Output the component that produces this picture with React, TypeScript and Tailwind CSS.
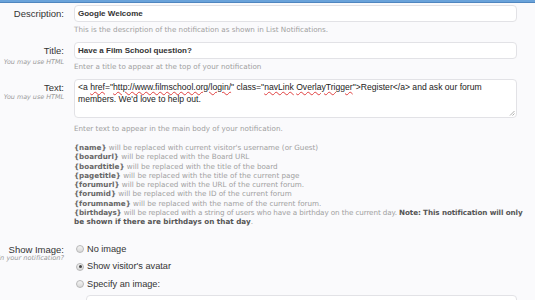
import React from "react";

const Sq = ({ children }: { children: React.ReactNode }) => (
  <span className="underline decoration-wavy decoration-[#e04040] decoration-1 underline-offset-[1px]">{children}</span>
);

const dv = { fontFamily: '"DejaVu Sans", Verdana, sans-serif' };

const Radio = ({ checked, label }: { checked?: boolean; label: string }) => (
  <div className="flex items-center h-[17.5px]">
    <span className="w-[8px] h-[8px] rounded-full border border-[#b8b8b8] bg-gradient-to-b from-[#f4f4f4] to-[#d8d8d8] flex items-center justify-center mr-[3px] ml-[2px]">
      {checked && <span className="w-[3px] h-[3px] rounded-full bg-[#444]" />}
    </span>
    <span className="text-[9.2px] text-[#333]">{label}</span>
  </div>
);

const vars: [string, string][] = [
  ["{name}", " will be replaced with current visitor's username (or Guest)"],
  ["{boardurl}", " will be replaced with the Board URL"],
  ["{boardtitle}", " will be replaced with the title of the board"],
  ["{pagetitle}", " will be replaced with the title of the current page"],
  ["{forumurl}", " will be replaced with the URL of the current forum."],
  ["{forumid}", " will be replaced with the ID of the current forum"],
  ["{forumname}", " will be replaced with the name of the current forum."],
];

export default function App() {
  return (
    <div
      className="w-[535px] h-[300px] overflow-hidden bg-[#fafafc] relative"
      style={{ fontFamily: '"Liberation Sans", Arial, sans-serif' }}
    >
      <div className="h-[3px] bg-[#6aa3da] border-b border-[#4f86bf]" />
      <div className="pt-[2px]">
        {/* Description */}
        <div className="grid grid-cols-[64px_443px] gap-x-[10px]">
          <div className="text-right text-[9.5px] leading-[17px] text-[#333]">Description:</div>
          <div>
            <div className="h-[17px] bg-white border border-[#e2e2e6] rounded-[4px] px-[3px] text-[8px] leading-[15px] font-bold text-[#333]">
              Google Welcome
            </div>
            <div className="mt-[3px] text-[7.2px] leading-[10px] text-[#a0a0a0]" style={dv}>
              This is the description of the notification as shown in List Notifications.
            </div>
          </div>
        </div>
        {/* Title */}
        <div className="grid grid-cols-[64px_443px] gap-x-[10px] mt-[7px]">
          <div className="flex flex-col items-end whitespace-nowrap">
            <div className="text-[9.5px] leading-[17px] text-[#333]">Title:</div>
            <div className="text-[6.4px] leading-[8px] italic text-[#999] -mt-[1px]" style={dv}>You may use HTML</div>
          </div>
          <div>
            <div className="h-[17px] bg-white border border-[#e2e2e6] rounded-[4px] px-[3px] text-[8px] leading-[15px] font-bold text-[#333]">
              Have a Film School question?
            </div>
            <div className="mt-[3px] text-[7.2px] leading-[10px] text-[#a0a0a0]" style={dv}>
              Enter a title to appear at the top of your notification
            </div>
          </div>
        </div>
        {/* Text */}
        <div className="grid grid-cols-[64px_443px] gap-x-[10px] mt-[7px]">
          <div className="flex flex-col items-end whitespace-nowrap">
            <div className="text-[9.5px] leading-[17px] text-[#333]">Text:</div>
            <div className="text-[6.4px] leading-[8px] italic text-[#999] -mt-[3px]" style={dv}>You may use HTML</div>
          </div>
          <div>
            <div className="relative h-[39px] bg-white border border-[#e2e2e6] rounded-[4px] px-[3px] pt-[1px] text-[8.6px] leading-[12px] text-[#222]">
              &lt;a <Sq>href</Sq>="<Sq>http://www.filmschool.org/login/</Sq>" class="<Sq>navLink</Sq> <Sq>OverlayTrigger</Sq>"&gt;Register&lt;/a&gt; and ask our forum members. We'd love to help out.
              <svg className="absolute right-[1px] bottom-[1px]" width="6" height="6" viewBox="0 0 6 6">
                <path d="M5.5 1 L1 5.5 M5.5 3.5 L3.5 5.5" stroke="#999" strokeWidth="0.8" />
              </svg>
            </div>
            <div className="mt-[6px] text-[7.2px] leading-[10px] text-[#a0a0a0]" style={dv}>
              Enter text to appear in the main body of your notification.
            </div>
            <div className="mt-[9px] text-[7.2px] leading-[9.3px] text-[#a0a0a0]" style={dv}>
              {vars.map(([k, v]) => (
                <div key={k} className="whitespace-nowrap">
                  <span className="font-bold text-[#666]">{k}</span>
                  {v}
                </div>
              ))}
              <div className="whitespace-nowrap tracking-[-0.1px]">
                <span className="font-bold text-[#666]">{"{birthdays}"}</span> will be replaced with a string of users who have a birthday on the current day.{" "}
                <span className="font-bold text-[#555]">Note: This notification will only</span>
              </div>
              <div>
                <span className="font-bold text-[#555]">be shown if there are birthdays on that day</span>.
              </div>
            </div>
          </div>
        </div>
        {/* Show Image */}
        <div className="grid grid-cols-[64px_443px] gap-x-[10px] mt-[14px]">
          <div className="flex flex-col items-end whitespace-nowrap">
            <div className="text-[9.5px] leading-[17.5px] text-[#333]">Show Image:</div>
            <div className="text-[6.6px] leading-[8px] italic text-[#999] -mt-[4px]" style={dv}>Show an image in your notification?</div>
          </div>
          <div>
            <Radio label="No image" />
            <Radio checked label="Show visitor's avatar" />
            <Radio label="Specify an image:" />
            <div className="ml-[12px] mt-[2px] h-[17px] bg-white border border-[#e2e2e6] rounded-[4px]" />
          </div>
        </div>
      </div>
    </div>
  );
}
